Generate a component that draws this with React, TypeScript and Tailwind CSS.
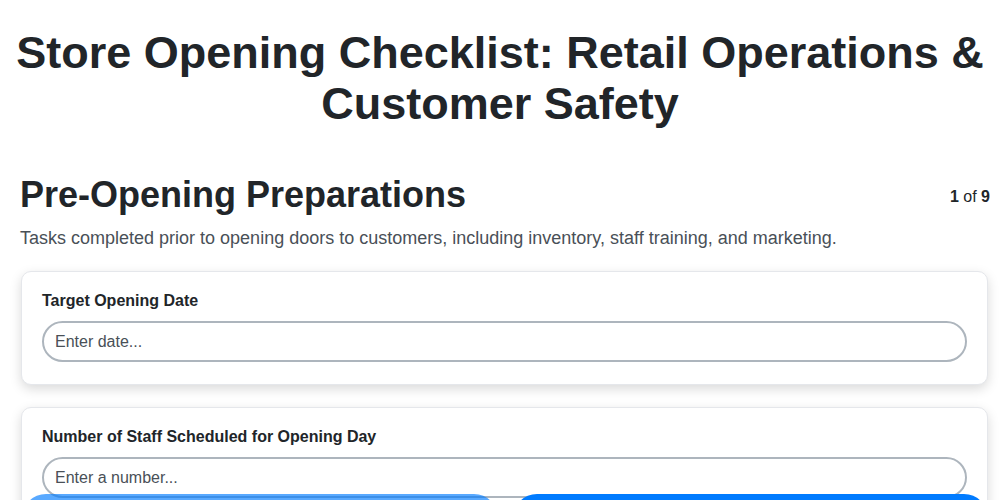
import { useState } from "react"

const fields = [
  { label: "Target Opening Date", placeholder: "Enter date..." },
  { label: "Number of Staff Scheduled for Opening Day", placeholder: "Enter a number..." },
]

export default function App() {
  const [values, setValues] = useState<string[]>(fields.map(() => ""))

  return (
    <div className="min-h-screen bg-white text-[#212529] font-['Liberation_Sans',Arial,sans-serif]">
      <h1 className="px-4 pt-[27px] text-center text-[45px] font-bold leading-[51px]">
        Store Opening Checklist: Retail Operations &amp; Customer Safety
      </h1>

      <div className="ml-[20px] mr-[10px] mt-[44px]">
        <div className="flex items-start justify-between">
          <h2 className="text-[36px] font-bold leading-[44px]">Pre-Opening Preparations</h2>
          <div className="pt-[12px] text-[16px]">
            <span className="font-bold">1</span> of <span className="font-bold">9</span>
          </div>
        </div>
        <p className="mt-[9px] text-[18px] leading-[24px] text-[#495057]">
          Tasks completed prior to opening doors to customers, including inventory, staff training, and marketing.
        </p>

        <div className="mr-[2px] ml-[1px] mt-[21px] flex flex-col gap-[22px]">
          {fields.map((f, i) => (
            <div
              key={f.label}
              className="rounded-[10px] border border-[#e5e7eb] bg-white px-5 pt-[19px] pb-[22px] shadow-[0_4px_12px_rgba(0,0,0,0.15)]"
            >
              <label className="block text-[16px] font-bold leading-[20px]">{f.label}</label>
              <input
                value={values[i]}
                onChange={e => setValues(values.map((v, j) => (j === i ? e.target.value : v)))}
                placeholder={f.placeholder}
                className="mt-[10px] h-[41px] w-full rounded-full border-2 border-[#adb5bd] px-[11px] text-[16px] text-[#212529] outline-none placeholder:text-[#495057]"
              />
            </div>
          ))}
        </div>
      </div>

      <div className="fixed left-0 right-0 top-[494px] flex gap-[15px] pl-[22px] pr-[12px]">
        <button disabled aria-label="Previous" className="h-12 flex-1 rounded-full bg-[#007bff] opacity-65" />
        <button aria-label="Next" className="h-12 flex-1 rounded-full bg-[#007bff]" />
      </div>
    </div>
  )
}
